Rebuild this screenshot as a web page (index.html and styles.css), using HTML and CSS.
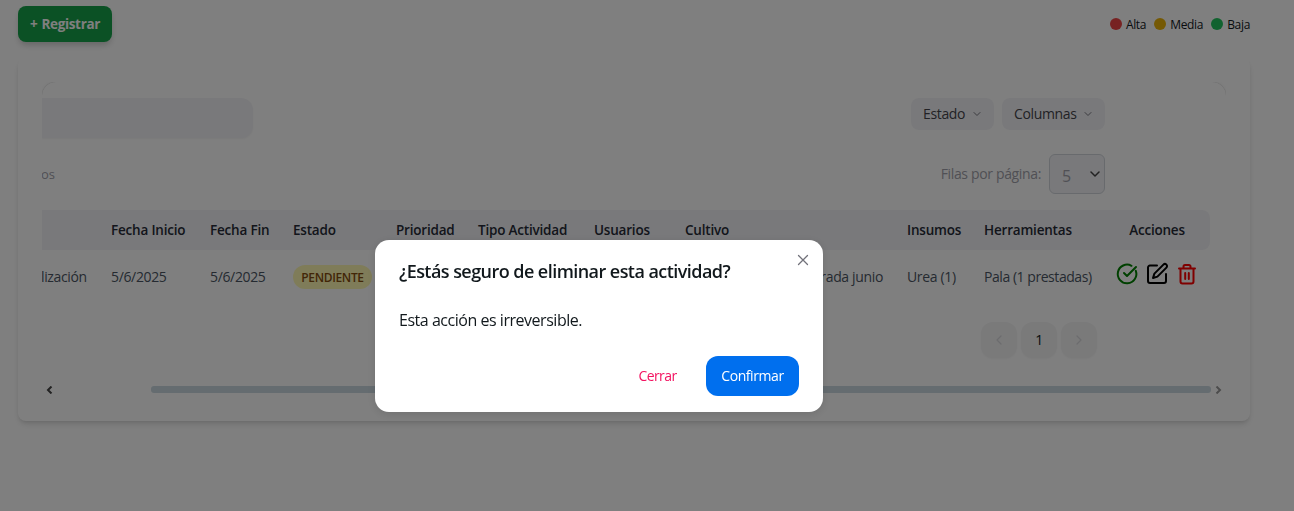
FILE: index.html
```html
<!DOCTYPE html>
<html lang="es">
<head>
<meta charset="utf-8">
<title>Actividades</title>
<link rel="stylesheet" href="styles.css">
</head>
<body>
<main class="page">
  <div class="topbar">
    <button class="register">+ Registrar</button>
    <ul class="legend">
      <li><i class="dot high"></i><span>Alta</span></li>
      <li><i class="dot mid"></i><span>Media</span></li>
      <li><i class="dot low"></i><span>Baja</span></li>
    </ul>
  </div>
  <section class="card">
    <div class="scroller">
      <div class="sheet">
        <div class="filters">
          <div class="search"></div>
          <div class="drops">
            <button class="drop">Estado <svg width="10" height="10" viewBox="0 0 10 10"><path d="M2 3.500l3 3 3-3"/></svg></button>
            <button class="drop wide">Columnas <svg width="10" height="10" viewBox="0 0 10 10"><path d="M2 3.500l3 3 3-3"/></svg></button>
          </div>
        </div>
        <div class="summary">
          <span class="total">os</span>
          <div class="rows">
            <span class="rows-label">Filas por página:</span>
            <div class="select">5<svg width="10" height="8" viewBox="0 0 10 8"><path d="M1 2l4 4 4-4"/></svg></div>
          </div>
        </div>
        <div class="row head">
          <span></span><span>Fecha Inicio</span><span>Fecha Fin</span><span>Estado</span><span>Prioridad</span><span>Tipo Actividad</span><span>Usuarios</span><span>Cultivo</span><span>Insumos</span><span>Herramientas</span><span class="center">Acciones</span>
        </div>
        <div class="row body">
          <span class="first">lización</span><span>5/6/2025</span><span>5/6/2025</span><span class="tag-cell"><b class="tag">PENDIENTE</b></span><span></span><span></span><span></span><span class="right">rada junio</span><span>Urea (1)</span><span class="tool">Pala (1 prestadas)</span>
          <span class="actions">
            <svg class="ok" width="24" height="24" viewBox="0 0 24 24"><path d="M20.800 8.800A9.300 9.300 0 1 1 16.500 3.800"/><path d="M9 11l3 3L21 5"/></svg>
            <svg class="edit" width="24" height="24" viewBox="0 0 24 24"><path d="M12 3.500H5a2 2 0 0 0-2 2V19a2 2 0 0 0 2 2h14a2 2 0 0 0 2-2v-7"/><path d="M18.400 2.600a2.100 2.100 0 0 1 3 3L12.400 14.600l-4.400 1.400 1.400-4.400z"/></svg>
            <svg class="del" width="24" height="24" viewBox="0 0 24 24"><path d="M4 6.500h16M18.500 6.500V19.500a2 2 0 0 1-2 2h-9a2 2 0 0 1-2-2V6.500M8.500 6V4.500a1.500 1.500 0 0 1 1.500-1.500h4a1.500 1.500 0 0 1 1.500 1.500V6M10.200 11v6M13.800 11v6"/></svg>
          </span>
        </div>
        <div class="pager">
          <span class="pg"><svg width="10" height="12" viewBox="0 0 10 12"><path d="M7 2L3 6l4 4"/></svg></span>
          <span class="pg num">1</span>
          <span class="pg"><svg width="10" height="12" viewBox="0 0 10 12"><path d="M3 2l4 4-4 4"/></svg></span>
        </div>
      </div>
    </div>
    <div class="hbar">
      <svg class="left" width="7" height="8" viewBox="0 0 7 8"><path d="M5.500 .5L2 4l3.500 3.500"/></svg>
      <div class="thumb"></div>
      <svg class="end" width="7" height="8" viewBox="0 0 7 8"><path d="M1.500 .5L5 4 1.500 7.500"/></svg>
    </div>
  </section>
</main>
<div class="overlay">
  <div class="modal" role="dialog">
    <svg class="close" width="12" height="12" viewBox="0 0 12 12"><path d="M1.500 1.500l9 9M10.500 1.500l-9 9"/></svg>
    <h2>¿Estás seguro de eliminar esta actividad?</h2>
    <p>Esta acción es irreversible.</p>
    <footer>
      <button class="cancel">Cerrar</button>
      <button class="confirm">Confirmar</button>
    </footer>
  </div>
</div>
</body>
</html>
```
FILE: styles.css
```css
* { box-sizing: border-box; }
body { margin: 0; height: 511px; overflow: hidden; background: #fff; color: #11181c; font-family: "Open Sans", "Noto Sans", sans-serif; font-size: 14px; line-height: 20px; letter-spacing: -0.35px; white-space: nowrap; }
button { font: inherit; letter-spacing: inherit; border: 0; padding: 0; }
svg { fill: none; stroke: currentColor; stroke-width: 1.2; stroke-linecap: round; stroke-linejoin: round; flex: none; }
.page { padding: 6px 44px 0 18px; }
.topbar { display: flex; justify-content: space-between; align-items: center; height: 36px; }
.register { width: 94px; height: 36px; border-radius: 8px; background: #16a34a; color: #fff; font-weight: 700; font-size: 13.5px; letter-spacing: -0.35px; word-spacing: 1px; box-shadow: 0 4px 6px -1px rgba(0,0,0,.2); }
.legend { display: flex; gap: 8px; margin: 0; padding: 0; list-style: none; font-size: 12px; letter-spacing: -0.32px; }
.legend li { display: flex; align-items: center; gap: 4px; }
.legend span { padding-top: 2px; }
.dot { width: 12px; height: 12px; border-radius: 50%; }
.high { background: #ef4444; }
.mid { background: #eab308; }
.low { background: #22c55e; }
.card { margin-top: 16px; height: 363px; padding: 24px; border-radius: 8px; background: #fff; box-shadow: 0 4px 6px -1px rgba(0,0,0,.12), 0 2px 4px -2px rgba(0,0,0,.12); }
.scroller { height: 300px; overflow: hidden; }
.sheet { height: 330px; padding-top: 16px; border-radius: 14px; box-shadow: 0 0 5px rgba(0,0,0,.06), 0 0 1px rgba(0,0,0,.25); }
.filters { display: flex; justify-content: space-between; width: 1063px; height: 40px; }
.search { width: 211px; height: 40px; border-radius: 0 12px 12px 0; background: #f3f3f7; box-shadow: 0 1px 2px rgba(0,0,0,.05); }
.drops { display: flex; gap: 8px; }
.drop { display: flex; align-items: center; justify-content: space-between; width: 83px; height: 32px; padding: 0 12px; border-radius: 8px; background: #f3f3f7; color: #45454b; }
.drop svg { color: #777780; stroke-width: 1; }
.drop.wide { width: 103px; }
.summary { display: flex; justify-content: space-between; align-items: center; width: 1063px; height: 40px; margin-top: 16px; color: #a1a1aa; }
.total { font-size: 13px; letter-spacing: -0.1px; margin-left: -1px; }
.rows { display: flex; align-items: center; gap: 8px; }
.select { display: flex; align-items: center; justify-content: space-between; width: 56px; height: 40px; padding: 3px 4px 0 12px; border: 1px solid #d1d5db; border-radius: 6px; background: #f3f3f7; font-size: 16px; }
.select svg { color: #444; stroke-width: 1.5; margin-top: -3px; }
.row { display: grid; grid-template-columns: 57px 99px 83px 103px 82px 116px 91px 222px 77px 132px 106px; align-items: center; width: 1168px; }
.row > span { padding-left: 12px; }
.head { height: 40px; margin-top: 16px; border-radius: 0 8px 8px 0; background: #f3f3f7; color: #262b37; font-weight: 600; font-size: 13.5px; letter-spacing: -0.2px; }
.head .center { padding: 0; text-align: center; }
.body { height: 54px; color: #4b5563; }
.body .first { padding: 0; margin-left: -1px; }
.body .right { padding-right: 12px; text-align: right; }
.body .tool { letter-spacing: -0.45px; }
.tag { display: flex; align-items: center; justify-content: center; width: 79px; height: 24px; padding-top: 1px; border-radius: 12px; background: #fef9b3; color: #854d0e; font-size: 12px; font-weight: 600; }
.actions { display: flex; gap: 6px; height: 36px; }
.actions svg { stroke-width: 2; margin-top: 3px; }
.row > .actions { padding-left: 11px; }
.ok { color: green; }
.edit { color: #000; }
.del { color: #f00; }
.pager { display: flex; gap: 4px; margin: 18px 0 0 939px; }
.pg { display: flex; align-items: center; justify-content: center; width: 36px; height: 36px; border-radius: 12px; background: #f4f4f5; color: #d9d9dc; box-shadow: 0 1px 2px rgba(0,0,0,.04); }
.num { color: #11181c; }
.hbar { display: flex; align-items: center; height: 15px; padding: 0 4px; }
.hbar svg { stroke-width: 2; stroke-linecap: butt; stroke-linejoin: miter; }
.left { color: #444; }
.end { color: #999; margin-left: 4px; }
.thumb { width: 1060px; height: 7px; margin-left: 98px; border-radius: 3px; background: #cbd9e1; }
.overlay { position: fixed; inset: 0; background: rgba(0,0,0,.5); }
.modal { position: absolute; left: 375px; top: 240px; width: 448px; height: 172px; border-radius: 14px; background: #fff; box-shadow: 0 2px 10px rgba(0,0,0,.12); }
.close { position: absolute; right: 14px; top: 14px; color: #71717a; stroke-width: 1.3; }
h2 { margin: 0; padding: 17px 24px 15px; font-size: 18px; line-height: 28px; font-weight: 600; letter-spacing: -0.55px; }
.modal p { margin: 0; padding: 8px 24px; font-size: 16px; line-height: 24px; letter-spacing: -0.47px; }
.modal footer { display: flex; justify-content: flex-end; gap: 8px; padding: 16px 24px; }
.cancel { width: 81px; height: 40px; background: none; color: #f31260; letter-spacing: -0.6px; }
.confirm { width: 93px; height: 40px; border-radius: 12px; background: #006fee; color: #fff; font-weight: 500; letter-spacing: -0.42px; }
```
